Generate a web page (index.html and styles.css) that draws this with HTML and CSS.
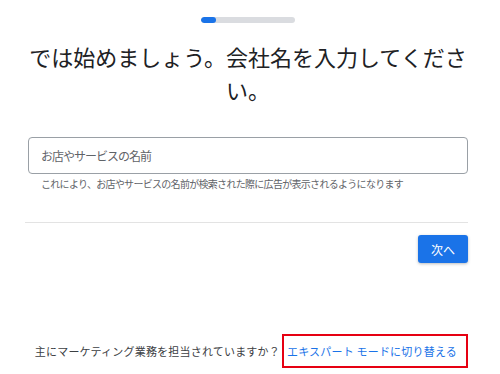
FILE: index.html
```html
<!DOCTYPE html>
<html lang="ja">

<head>
  <meta charset="UTF-8" />
  <meta name="viewport" content="width=device-width, initial-scale=1.0">
  <title>ビジネス名の入力</title>
  <link rel="stylesheet" href="styles.css">
</head>

<body>
  <div class="page">
    <div class="progress">
      <div class="progress-fill"></div>
    </div>

    <h1 class="title">では始めましょう。会社名を入力してください。</h1>

    <div class="field">
      <input class="field-input" type="text" placeholder="お店やサービスの名前">
      <p class="field-hint">これにより、お店やサービスの名前が検索された際に広告が表示されるようになります</p>
    </div>

    <hr class="divider">

    <div class="actions">
      <button class="btn-next">次へ</button>
    </div>

    <div class="footer">
      <span class="footer-text">主にマーケティング業務を担当されていますか？</span>
      <a href="#" class="expert-link">エキスパート モードに切り替える</a>
    </div>
  </div>
</body>

</html>
```

FILE: styles.css
```css
body {
  margin: 0;
  font-family: "Noto Sans CJK JP", "Noto Sans", sans-serif;
  background: #fff;
  color: #3c4043;
}

.page {
  width: 440px;
  height: 374px;
  margin-left: 28px;
  display: flex;
  flex-direction: column;
}

.progress {
  align-self: center;
  width: 94px;
  height: 6px;
  margin-top: 17px;
  background: #dadce0;
  border-radius: 3px;
  overflow: hidden;
}

.progress-fill {
  width: 15px;
  height: 100%;
  background: #1a73e8;
  border-radius: 3px;
}

.title {
  margin: 17px 0 0;
  font-size: 22px;
  font-weight: 400;
  line-height: 33px;
  text-align: center;
  color: #202124;
}

.field {
  margin-top: 31px;
}

.field-input {
  box-sizing: border-box;
  width: 100%;
  height: 37px;
  padding: 0 12px;
  border: 1px solid #9aa0a6;
  border-radius: 4px;
  font-family: inherit;
  font-size: 12px;
  letter-spacing: -1px;
  color: #202124;
  outline: none;
}

.field-input::placeholder {
  color: #5f6368;
}

.field-hint {
  margin: 3px 0 0 13px;
  font-size: 10px;
  letter-spacing: -0.7px;
  line-height: 14px;
  color: #5f6368;
}

.divider {
  width: 443px;
  margin: 31px 0 0 -3px;
  border: 0;
  border-top: 1px solid #e3e3e3;
}

.actions {
  display: flex;
  justify-content: flex-end;
  margin-top: 12px;
}

.btn-next {
  width: 50px;
  height: 28px;
  border: 0;
  border-radius: 3px;
  background: #1a73e8;
  color: #fff;
  font-family: inherit;
  font-size: 12px;
  box-shadow: 0 1px 3px rgba(60, 64, 67, 0.35);
}

.footer {
  display: flex;
  align-items: center;
  justify-content: flex-end;
  margin-top: 71px;
  font-size: 11px;
  letter-spacing: 0.2px;
}

.expert-link {
  box-sizing: border-box;
  display: flex;
  align-items: center;
  height: 34px;
  margin-left: 2px;
  padding: 0 9px 0 3px;
  border: 2px solid #e60012;
  color: #1a73e8;
  text-decoration: none;
}
```
